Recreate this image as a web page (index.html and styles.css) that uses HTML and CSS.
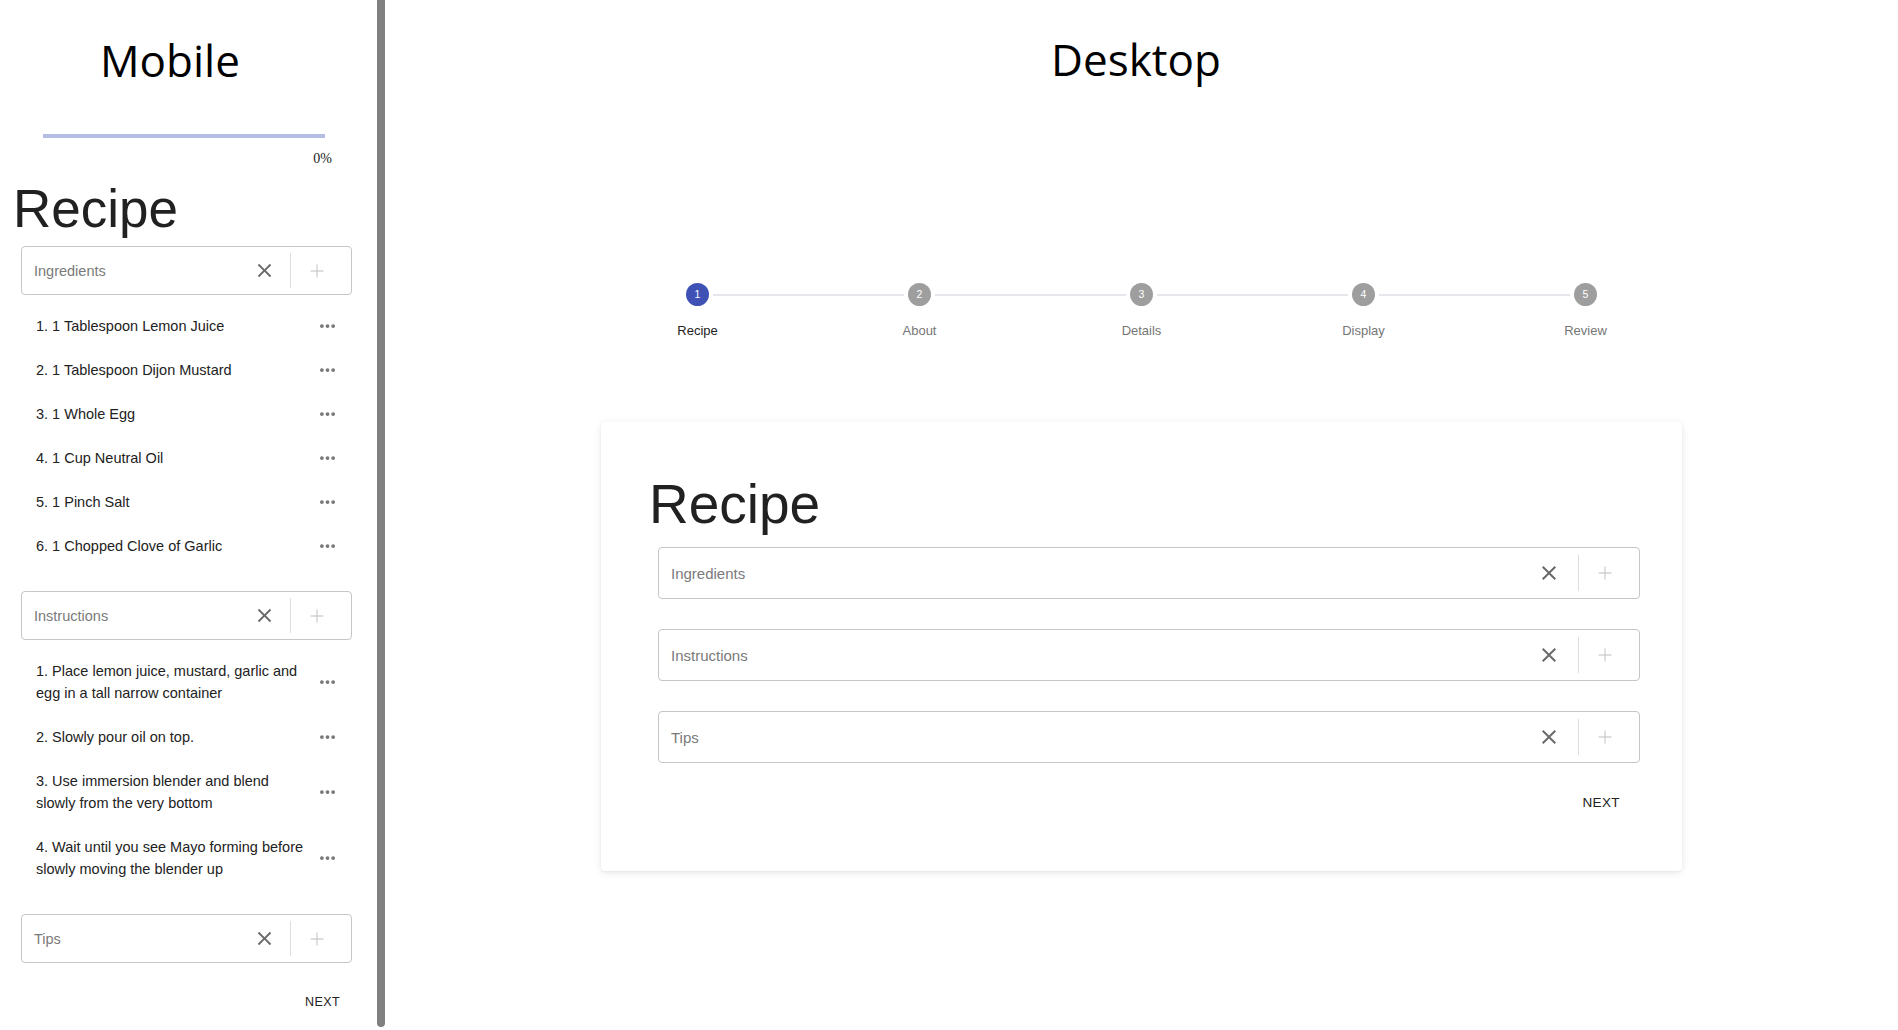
FILE: index.html
```html
<!DOCTYPE html>
<html lang="en">
<head>
<meta charset="utf-8">
<title>Recipe form – Mobile / Desktop</title>
<link rel="stylesheet" href="styles.css">
</head>
<body>
<div class="page">
  <section class="mobile">
    <h1 class="pane-title mobile-title">Mobile</h1>
    <div class="progress">
      <div class="progress-track"></div>
      <div class="progress-label">0%</div>
    </div>
    <h2 class="recipe-title mobile-recipe">Recipe</h2>

    <div class="group">
      <div class="field">
        <span class="field-label">Ingredients</span>
        <span class="icon-btn clear"><svg viewBox="0 0 24 24" width="23" height="23"><path d="M19 6.41L17.59 5 12 10.59 6.41 5 5 6.41 10.59 12 5 17.59 6.41 19 12 13.41 17.59 19 19 17.59 13.41 12z"/></svg></span>
        <span class="field-sep"></span>
        <span class="icon-btn add"><svg viewBox="0 0 24 24" width="22" height="22"><path d="M19 12.5h-6.5V19h-1v-6.5H5v-1h6.5V5h1v6.5H19z"/></svg></span>
      </div>
      <ul class="items">
        <li><span class="item-text">1. 1 Tablespoon Lemon Juice</span><svg class="dots" viewBox="4 10 16 4" width="15" height="4"><circle cx="6" cy="12" r="2"/><circle cx="12" cy="12" r="2"/><circle cx="18" cy="12" r="2"/></svg></li>
        <li><span class="item-text">2. 1 Tablespoon Dijon Mustard</span><svg class="dots" viewBox="4 10 16 4" width="15" height="4"><circle cx="6" cy="12" r="2"/><circle cx="12" cy="12" r="2"/><circle cx="18" cy="12" r="2"/></svg></li>
        <li><span class="item-text">3. 1 Whole Egg</span><svg class="dots" viewBox="4 10 16 4" width="15" height="4"><circle cx="6" cy="12" r="2"/><circle cx="12" cy="12" r="2"/><circle cx="18" cy="12" r="2"/></svg></li>
        <li><span class="item-text">4. 1 Cup Neutral Oil</span><svg class="dots" viewBox="4 10 16 4" width="15" height="4"><circle cx="6" cy="12" r="2"/><circle cx="12" cy="12" r="2"/><circle cx="18" cy="12" r="2"/></svg></li>
        <li><span class="item-text">5. 1 Pinch Salt</span><svg class="dots" viewBox="4 10 16 4" width="15" height="4"><circle cx="6" cy="12" r="2"/><circle cx="12" cy="12" r="2"/><circle cx="18" cy="12" r="2"/></svg></li>
        <li><span class="item-text">6. 1 Chopped Clove of Garlic</span><svg class="dots" viewBox="4 10 16 4" width="15" height="4"><circle cx="6" cy="12" r="2"/><circle cx="12" cy="12" r="2"/><circle cx="18" cy="12" r="2"/></svg></li>
      </ul>
    </div>

    <div class="group">
      <div class="field">
        <span class="field-label">Instructions</span>
        <span class="icon-btn clear"><svg viewBox="0 0 24 24" width="23" height="23"><path d="M19 6.41L17.59 5 12 10.59 6.41 5 5 6.41 10.59 12 5 17.59 6.41 19 12 13.41 17.59 19 19 17.59 13.41 12z"/></svg></span>
        <span class="field-sep"></span>
        <span class="icon-btn add"><svg viewBox="0 0 24 24" width="22" height="22"><path d="M19 12.5h-6.5V19h-1v-6.5H5v-1h6.5V5h1v6.5H19z"/></svg></span>
      </div>
      <ul class="items">
        <li><span class="item-text">1. Place lemon juice, mustard, garlic and egg in a tall narrow container</span><svg class="dots" viewBox="4 10 16 4" width="15" height="4"><circle cx="6" cy="12" r="2"/><circle cx="12" cy="12" r="2"/><circle cx="18" cy="12" r="2"/></svg></li>
        <li><span class="item-text">2. Slowly pour oil on top.</span><svg class="dots" viewBox="4 10 16 4" width="15" height="4"><circle cx="6" cy="12" r="2"/><circle cx="12" cy="12" r="2"/><circle cx="18" cy="12" r="2"/></svg></li>
        <li><span class="item-text">3. Use immersion blender and blend slowly from the very bottom</span><svg class="dots" viewBox="4 10 16 4" width="15" height="4"><circle cx="6" cy="12" r="2"/><circle cx="12" cy="12" r="2"/><circle cx="18" cy="12" r="2"/></svg></li>
        <li><span class="item-text">4. Wait until you see Mayo forming before slowly moving the blender up</span><svg class="dots" viewBox="4 10 16 4" width="15" height="4"><circle cx="6" cy="12" r="2"/><circle cx="12" cy="12" r="2"/><circle cx="18" cy="12" r="2"/></svg></li>
      </ul>
    </div>

    <div class="field">
      <span class="field-label">Tips</span>
      <span class="icon-btn clear"><svg viewBox="0 0 24 24" width="23" height="23"><path d="M19 6.41L17.59 5 12 10.59 6.41 5 5 6.41 10.59 12 5 17.59 6.41 19 12 13.41 17.59 19 19 17.59 13.41 12z"/></svg></span>
      <span class="field-sep"></span>
      <span class="icon-btn add"><svg viewBox="0 0 24 24" width="22" height="22"><path d="M19 12.5h-6.5V19h-1v-6.5H5v-1h6.5V5h1v6.5H19z"/></svg></span>
    </div>

    <div class="actions mobile-actions">
      <button class="next" type="button">Next</button>
    </div>
  </section>

  <div class="scrollbar"></div>

  <section class="desktop">
    <h1 class="pane-title desktop-title">Desktop</h1>

    <div class="stepper">
      <div class="step-track">
        <span class="step-dot active">1</span>
        <span class="step-line"></span>
        <span class="step-dot">2</span>
        <span class="step-line"></span>
        <span class="step-dot">3</span>
        <span class="step-line"></span>
        <span class="step-dot">4</span>
        <span class="step-line"></span>
        <span class="step-dot">5</span>
      </div>
      <div class="step-labels">
        <span class="step-label active">Recipe</span>
        <span class="step-label">About</span>
        <span class="step-label">Details</span>
        <span class="step-label">Display</span>
        <span class="step-label">Review</span>
      </div>
    </div>

    <div class="card">
      <h2 class="recipe-title desktop-recipe">Recipe</h2>
      <div class="desk-fields">
        <div class="field wide">
          <span class="field-label">Ingredients</span>
          <span class="icon-btn clear"><svg viewBox="0 0 24 24" width="24" height="24"><path d="M19 6.41L17.59 5 12 10.59 6.41 5 5 6.41 10.59 12 5 17.59 6.41 19 12 13.41 17.59 19 19 17.59 13.41 12z"/></svg></span>
          <span class="field-sep"></span>
          <span class="icon-btn add"><svg viewBox="0 0 24 24" width="22" height="22"><path d="M19 12.5h-6.5V19h-1v-6.5H5v-1h6.5V5h1v6.5H19z"/></svg></span>
        </div>
        <div class="field wide">
          <span class="field-label">Instructions</span>
          <span class="icon-btn clear"><svg viewBox="0 0 24 24" width="24" height="24"><path d="M19 6.41L17.59 5 12 10.59 6.41 5 5 6.41 10.59 12 5 17.59 6.41 19 12 13.41 17.59 19 19 17.59 13.41 12z"/></svg></span>
          <span class="field-sep"></span>
          <span class="icon-btn add"><svg viewBox="0 0 24 24" width="22" height="22"><path d="M19 12.5h-6.5V19h-1v-6.5H5v-1h6.5V5h1v6.5H19z"/></svg></span>
        </div>
        <div class="field wide">
          <span class="field-label">Tips</span>
          <span class="icon-btn clear"><svg viewBox="0 0 24 24" width="24" height="24"><path d="M19 6.41L17.59 5 12 10.59 6.41 5 5 6.41 10.59 12 5 17.59 6.41 19 12 13.41 17.59 19 19 17.59 13.41 12z"/></svg></span>
          <span class="field-sep"></span>
          <span class="icon-btn add"><svg viewBox="0 0 24 24" width="22" height="22"><path d="M19 12.5h-6.5V19h-1v-6.5H5v-1h6.5V5h1v6.5H19z"/></svg></span>
        </div>
        <div class="actions desktop-actions">
          <button class="next wide-next" type="button">Next</button>
        </div>
      </div>
    </div>
  </section>
</div>
</body>
</html>
```

FILE: styles.css
```css
* { box-sizing: border-box; }

html, body {
  margin: 0;
  padding: 0;
  background: #ffffff;
}

body {
  width: 1898px;
  height: 1030px;
  overflow: hidden;
  font-family: "Liberation Sans", Arial, sans-serif;
  color: #212121;
}

.page {
  display: flex;
  align-items: flex-start;
  height: 1030px;
}

/* ---------- shared ---------- */
.pane-title {
  margin: 0;
  font-family: "Open Sans", "Liberation Sans", sans-serif;
  font-weight: 400;
  font-size: 44px;
  line-height: 50px;
  color: #000;
  text-align: center;
}

.recipe-title {
  margin: 0;
  font-family: "Liberation Sans", Arial, sans-serif;
  font-weight: 400;
  line-height: 1;
  color: #212121;
}

.field {
  display: flex;
  align-items: center;
  height: 49px;
  border: 1px solid #c6c6c6;
  border-radius: 4px;
  padding: 0 8px 0 12px;
  background: #fff;
}

.field-label {
  flex: 1;
  font-size: 14.5px;
  color: #7a7a7a;
  white-space: nowrap;
}

.icon-btn {
  display: flex;
  align-items: center;
  justify-content: center;
  height: 100%;
}

.icon-btn.clear {
  width: 44px;
  margin-right: 4px;
}

.icon-btn.clear svg { fill: #6a6a6a; }

.icon-btn.add {
  width: 52px;
}

.icon-btn.add svg { fill: #bdbdbd; }

.field-sep {
  align-self: stretch;
  width: 1px;
  margin: 6px 0;
  background: #dedede;
}

.actions {
  display: flex;
  justify-content: flex-end;
}

.next {
  border: 0;
  background: transparent;
  padding: 6px 8px;
  height: 36px;
  font-family: "Liberation Sans", Arial, sans-serif;
  font-size: 12.5px;
  font-weight: 400;
  letter-spacing: 0.4px;
  text-transform: uppercase;
  color: #222;
  line-height: 24px;
  cursor: pointer;
}

/* ---------- mobile pane ---------- */
.mobile {
  width: 377px;
  padding: 35px 25px 0 21px;
  flex-shrink: 0;
}

.mobile-title {
  width: 340px;
  margin-left: -21px;
}

.progress {
  margin-top: 49px;
  width: 331px;
}

.progress-track {
  margin-left: 22px;
  width: 282px;
  height: 4px;
  background: #b7bce2;
}

.progress-label {
  margin-top: 13px;
  padding-right: 20px;
  text-align: right;
  font-family: "Liberation Serif", "Times New Roman", serif;
  font-size: 14px;
  line-height: 16px;
  color: #222;
}

.mobile-recipe {
  margin-top: 15px;
  margin-left: -8px;
  font-size: 53px;
}

.mobile .field,
.mobile .group {
  width: 331px;
}

.mobile-recipe + .group {
  margin-top: 11px;
}

.group {
  margin-bottom: 15px;
}

.items {
  list-style: none;
  margin: 0;
  padding: 9px 0 8px;
}

.items li {
  display: flex;
  align-items: center;
  padding: 11px 17px 11px 15px;
  font-size: 14.5px;
  line-height: 22px;
  color: #222;
}

.item-text {
  flex: 1;
  margin-right: 8px;
}

.dots {
  flex-shrink: 0;
  fill: #777;
}

.mobile-actions {
  width: 331px;
  margin-top: 21px;
  padding-right: 4px;
}

/* ---------- scrollbar divider ---------- */
.scrollbar {
  flex-shrink: 0;
  width: 8px;
  height: 1027px;
  background: #808080;
  border-radius: 0 0 4px 4px;
}

/* ---------- desktop pane ---------- */
.desktop {
  flex: 1;
  padding-top: 34px;
  display: flex;
  flex-direction: column;
  align-items: center;
}

.desktop-title {
  padding-right: 11px;
}

.stepper {
  width: 1110px;
  margin-top: 199px;
}

.step-track {
  display: flex;
  align-items: center;
  padding: 0 99.5px;
}

.step-dot {
  flex-shrink: 0;
  width: 23px;
  height: 23px;
  border-radius: 50%;
  background: #9e9e9e;
  color: #fff;
  font-size: 10.5px;
  line-height: 23px;
  text-align: center;
}

.step-dot.active {
  background: #3f51b5;
}

.step-line {
  flex: 1;
  height: 2px;
  margin: 0 4px;
  background: #e6e6ec;
}

.step-labels {
  display: grid;
  grid-template-columns: repeat(5, 1fr);
  margin-top: 16px;
}

.step-label {
  text-align: center;
  font-size: 13px;
  line-height: 17px;
  color: #767676;
}

.step-label.active {
  color: #222;
}

.card {
  width: 1081px;
  margin-top: 83px;
  padding: 55px 42px 50px 48px;
  background: #fff;
  border-radius: 4px;
  box-shadow: 0 2px 10px rgba(0, 0, 0, 0.08), 0 1px 3px rgba(0, 0, 0, 0.06);
}

.desktop-recipe {
  font-size: 55px;
}

.desk-fields {
  margin-top: 15px;
  margin-left: 9px;
}

.field.wide {
  height: 52px;
  margin-bottom: 30px;
}

.field.wide .field-label {
  font-size: 15px;
}

.field.wide .icon-btn.clear {
  margin-right: 7px;
}

.field.wide .field-sep {
  margin: 7px 0;
}

.desktop-actions {
  margin-top: -8px;
  padding-right: 12px;
}

.wide-next {
  font-size: 13.5px;
}
```
